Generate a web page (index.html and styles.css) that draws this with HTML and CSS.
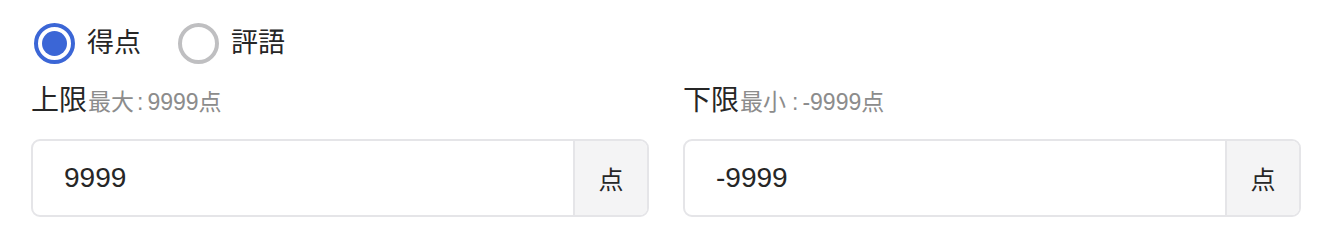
FILE: index.html
```html
<!DOCTYPE html>
<html lang="ja">
<head>
<meta charset="utf-8">
<link rel="stylesheet" href="styles.css">
</head>
<body>
<div class="page">
  <div class="radio-group">
    <label class="radio checked"><span class="circle"><span class="dot"></span></span><span class="radio-text">得点</span></label>
    <label class="radio"><span class="circle"></span><span class="radio-text">評語</span></label>
  </div>
  <div class="fields">
    <div class="field">
      <div class="label"><span class="label-main">上限</span><span class="label-hint">最大<span class="colon">:</span>9999点</span></div>
      <div class="input-group">
        <div class="input">9999</div>
        <div class="addon">点</div>
      </div>
    </div>
    <div class="field">
      <div class="label"><span class="label-main">下限</span><span class="label-hint">最小<span class="colon wide">:</span>-9999点</span></div>
      <div class="input-group">
        <div class="input">-9999</div>
        <div class="addon">点</div>
      </div>
    </div>
  </div>
</div>
</body>
</html>
```

FILE: styles.css
```css
* { box-sizing: border-box; }
body {
  margin: 0;
  background: #fff;
  font-family: "Liberation Sans", "Noto Sans CJK JP", sans-serif;
  color: #262626;
}
.page {
  padding: 23px 29px 0 31px;
}
.radio-group {
  display: flex;
  align-items: center;
  height: 40px;
  padding-left: 3px;
  gap: 37px;
}
.radio {
  display: flex;
  align-items: center;
  gap: 12px;
}
.circle {
  width: 41px;
  height: 41px;
  border-radius: 50%;
  border: 4px solid #bfbfc1;
  display: flex;
  align-items: center;
  justify-content: center;
  background: #fff;
}
.radio.checked .circle {
  border-color: #3b66d6;
}
.dot {
  width: 25px;
  height: 25px;
  border-radius: 50%;
  background: #3b66d6;
}
.radio-text {
  font-size: 27px;
  line-height: 40px;
  color: #262626;
}
.fields {
  display: grid;
  grid-template-columns: 618px 618px;
  column-gap: 34px;
  margin-top: 18px;
}
.label {
  display: flex;
  align-items: baseline;
  height: 40px;
}
.label-main {
  font-size: 28px;
  line-height: 40px;
  color: #262626;
}
.label-hint {
  font-size: 23px;
  color: #8c8c8c;
  padding-left: 1px;
}
.colon {
  padding: 0 4px 0 3px;
}
.colon.wide {
  padding: 0 4px 0 6px;
}
.input-group {
  display: flex;
  margin-top: 18px;
  height: 78px;
  border: 2px solid #e5e5e8;
  border-radius: 9px;
  overflow: hidden;
}
.input {
  flex: 1;
  display: flex;
  align-items: center;
  padding-left: 31px;
  font-size: 28px;
  color: #262626;
}
.addon {
  width: 74px;
  border-left: 2px solid #e5e5e8;
  background: #f4f4f5;
  display: flex;
  align-items: center;
  justify-content: center;
  font-size: 25px;
  color: #262626;
}
```
